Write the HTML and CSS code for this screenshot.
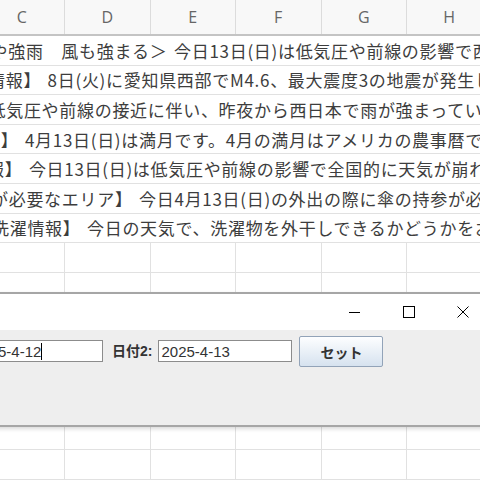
FILE: index.html
```html
<!DOCTYPE html>
<html lang="ja">
<head>
    <meta charset="UTF-8">
    <meta name="viewport" content="width=device-width, initial-scale=1.0">
    <title>日付設定</title>
    <link rel="stylesheet" href="styles.css">
</head>
<body>

    <!-- Spreadsheet -->
    <div class="sheet">
        <div class="colhead">
            <div class="colname">C</div>
            <div class="colname">D</div>
            <div class="colname">E</div>
            <div class="colname">F</div>
            <div class="colname">G</div>
            <div class="colname">H</div>
        </div>

        <div class="row textrow"><span class="celltext r1">や強雨　風も強まる＞ 今日13日(日)は低気圧や前線の影響で西日本</span></div>
        <div class="row textrow"><span class="celltext r2">情報】 8日(火)に愛知県西部でM4.6、最大震度3の地震が発生しました</span></div>
        <div class="row textrow"><span class="celltext r3">低気圧や前線の接近に伴い、昨夜から西日本で雨が強まっています</span></div>
        <div class="row textrow"><span class="celltext r4">報】 4月13日(日)は満月です。4月の満月はアメリカの農事暦で</span></div>
        <div class="row textrow"><span class="celltext r5">報】 今日13日(日)は低気圧や前線の影響で全国的に天気が崩れ</span></div>
        <div class="row textrow"><span class="celltext r6">が必要なエリア】 今日4月13日(日)の外出の際に傘の持参が必要</span></div>
        <div class="row textrow"><span class="celltext r7">洗濯情報】 今日の天気で、洗濯物を外干しできるかどうかをお伝え</span></div>

        <div class="row gridrow"><div class="cell"></div><div class="cell"></div><div class="cell"></div><div class="cell"></div><div class="cell"></div><div class="cell"></div></div>
        <div class="row gridrow"><div class="cell"></div><div class="cell"></div><div class="cell"></div><div class="cell"></div><div class="cell"></div><div class="cell"></div></div>
        <div class="row gridrow"><div class="cell"></div><div class="cell"></div><div class="cell"></div><div class="cell"></div><div class="cell"></div><div class="cell"></div></div>
        <div class="row gridrow"><div class="cell"></div><div class="cell"></div><div class="cell"></div><div class="cell"></div><div class="cell"></div><div class="cell"></div></div>
        <div class="row gridrow"><div class="cell"></div><div class="cell"></div><div class="cell"></div><div class="cell"></div><div class="cell"></div><div class="cell"></div></div>
        <div class="row gridrow"><div class="cell"></div><div class="cell"></div><div class="cell"></div><div class="cell"></div><div class="cell"></div><div class="cell"></div></div>
        <div class="row gridrow"><div class="cell"></div><div class="cell"></div><div class="cell"></div><div class="cell"></div><div class="cell"></div><div class="cell"></div></div>
        <div class="row gridrow"><div class="cell"></div><div class="cell"></div><div class="cell"></div><div class="cell"></div><div class="cell"></div><div class="cell"></div></div>
    </div>

    <!-- Date dialog window -->
    <div class="dialog">
        <div class="titlebar">
            <div class="winbtn">
                <svg width="12" height="12" viewBox="0 0 12 12"><line x1="0" y1="6.5" x2="11" y2="6.5" stroke="#000" stroke-width="1"/></svg>
            </div>
            <div class="winbtn">
                <svg width="12" height="12" viewBox="0 0 12 12"><rect x="0.5" y="0.5" width="11" height="11" fill="none" stroke="#000" stroke-width="1"/></svg>
            </div>
            <div class="winbtn">
                <svg width="12" height="12" viewBox="0 0 12 12"><path d="M0.5 0.5 L11.5 11.5 M11.5 0.5 L0.5 11.5" stroke="#000" stroke-width="1"/></svg>
            </div>
        </div>
        <div class="dialog-body">
            <div class="field field-first"><span>2025-4-12</span><span class="caret"></span></div>
            <label class="field-label">日付2:</label>
            <div class="field"><span>2025-4-13</span></div>
            <button class="set-btn">セット</button>
        </div>
    </div>

</body>
</html>
```

FILE: styles.css
```css
body {
    margin: 0;
    width: 480px;
    height: 480px;
    overflow: hidden;
    position: relative;
    background-color: #fff;
    font-family: "Noto Sans CJK JP", sans-serif;
}

/* Spreadsheet */
.sheet {
    margin-left: -20.5px;
    width: 513px;
}

.colhead {
    display: grid;
    grid-template-columns: repeat(6, 85.5px);
    height: 36px;
    box-sizing: border-box;
    border-bottom: 2px solid #c4c4c4;
    background-color: #f8f8f8;
}

.colname {
    display: flex;
    align-items: center;
    justify-content: center;
    border-right: 1px solid #dcdcdc;
    font-family: "Open Sans", "Noto Sans", sans-serif;
    font-size: 16px;
    color: #666;
}

.row {
    height: 29.6px;
    box-sizing: border-box;
    border-bottom: 1px solid #e1e1e1;
}

.textrow {
    display: flex;
    align-items: center;
    white-space: nowrap;
    overflow: hidden;
    font-size: 17px;
    letter-spacing: 0.7px;
    color: #3d3d3d;
    word-spacing: 2px;
}

.r1 { margin-left: 11px; }
.r2 { margin-left: 8.5px; }
.r3 { margin-left: 9px; }
.r4 { margin-left: 3.5px; }
.r5 { margin-left: 7.5px; }
.r6 { margin-left: 11.5px; }
.r7 { margin-left: 12.5px; }

.gridrow {
    display: grid;
    grid-template-columns: repeat(6, 85.5px);
}

.cell {
    border-right: 1px solid #e1e1e1;
}

/* Dialog window */
.dialog {
    position: absolute;
    left: -40px;
    right: -10px;
    top: 292px;
    height: 135px;
    box-sizing: border-box;
    border-top: 2px solid #a6a6a6;
    border-bottom: 2px solid #a6a6a6;
    background-color: #eeeeee;
    box-shadow: 0 2px 4px rgba(0, 0, 0, 0.15);
}

.titlebar {
    height: 36px;
    background-color: #fff;
    display: flex;
    justify-content: flex-end;
}

.winbtn {
    width: 54px;
    display: flex;
    align-items: center;
    justify-content: center;
}

.dialog-body {
    display: flex;
    align-items: flex-start;
    padding: 10px 0 0 10px;
    font-family: "Liberation Sans", "Noto Sans CJK JP", sans-serif;
}

.field {
    width: 134px;
    height: 22px;
    box-sizing: border-box;
    border: 1px solid #8c8c8c;
    background-color: #fff;
    padding-left: 2px;
    display: flex;
    align-items: center;
    font-size: 15px;
    color: #333;
}

.field-first {
    width: 133px;
}

.caret {
    width: 1px;
    height: 17px;
    background-color: #000;
}

.field-label {
    margin: 0 6px 0 9px;
    height: 22px;
    line-height: 22px;
    font-size: 14px;
    font-weight: bold;
    color: #333;
}

.set-btn {
    margin: -4px 0 0 7px;
    width: 84px;
    height: 31px;
    padding: 0;
    border: 1px solid #92a3b8;
    border-radius: 2px;
    background: linear-gradient(#fdfeff, #d6e2ef);
    font-family: "Noto Sans CJK JP", sans-serif;
    font-size: 14px;
    font-weight: bold;
    color: #333;
}
```
